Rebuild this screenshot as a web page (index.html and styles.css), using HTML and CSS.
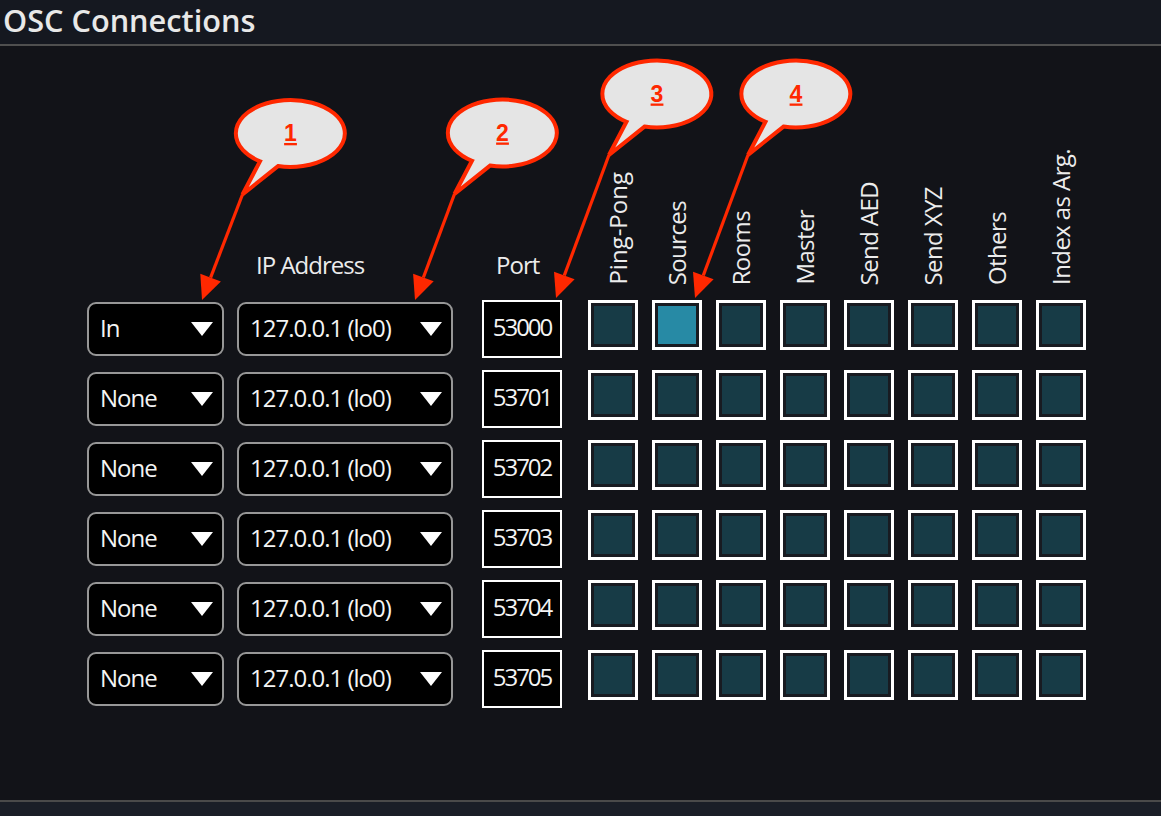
FILE: index.html
```html
<!DOCTYPE html>
<html lang="en">
<head>
<meta charset="utf-8">
<title>OSC Connections</title>
<link rel="stylesheet" href="styles.css">
</head>
<body>
<div class="app">
  <header class="titlebar"><h1 class="title">OSC Connections</h1></header>
  <main class="panel">
    <div class="table">
      <div class="row head">
        <div class="c-mode"></div>
        <div class="c-ip"><span class="hlabel ip-label">IP Address</span></div>
        <div class="c-port"><span class="hlabel port-label">Port</span></div>
        <div class="checks">
          <div class="vcell"><span class="vlabel first">Ping-Pong</span></div>
          <div class="vcell"><span class="vlabel">Sources</span></div>
          <div class="vcell"><span class="vlabel">Rooms</span></div>
          <div class="vcell"><span class="vlabel">Master</span></div>
          <div class="vcell"><span class="vlabel">Send AED</span></div>
          <div class="vcell"><span class="vlabel">Send XYZ</span></div>
          <div class="vcell"><span class="vlabel">Others</span></div>
          <div class="vcell"><span class="vlabel">Index as Arg.</span></div>
        </div>
      </div>

      <div class="row">
        <div class="select c-mode"><span class="val">In</span><i class="caret"></i></div>
        <div class="select c-ip"><span class="val">127.0.0.1 (lo0)</span><i class="caret"></i></div>
        <div class="port c-port">53000</div>
        <div class="checks">
          <div class="check"></div><div class="check on"></div><div class="check"></div><div class="check"></div>
          <div class="check"></div><div class="check"></div><div class="check"></div><div class="check"></div>
        </div>
      </div>
      <div class="row">
        <div class="select c-mode"><span class="val">None</span><i class="caret"></i></div>
        <div class="select c-ip"><span class="val">127.0.0.1 (lo0)</span><i class="caret"></i></div>
        <div class="port c-port">53701</div>
        <div class="checks">
          <div class="check"></div><div class="check"></div><div class="check"></div><div class="check"></div>
          <div class="check"></div><div class="check"></div><div class="check"></div><div class="check"></div>
        </div>
      </div>
      <div class="row">
        <div class="select c-mode"><span class="val">None</span><i class="caret"></i></div>
        <div class="select c-ip"><span class="val">127.0.0.1 (lo0)</span><i class="caret"></i></div>
        <div class="port c-port">53702</div>
        <div class="checks">
          <div class="check"></div><div class="check"></div><div class="check"></div><div class="check"></div>
          <div class="check"></div><div class="check"></div><div class="check"></div><div class="check"></div>
        </div>
      </div>
      <div class="row">
        <div class="select c-mode"><span class="val">None</span><i class="caret"></i></div>
        <div class="select c-ip"><span class="val">127.0.0.1 (lo0)</span><i class="caret"></i></div>
        <div class="port c-port">53703</div>
        <div class="checks">
          <div class="check"></div><div class="check"></div><div class="check"></div><div class="check"></div>
          <div class="check"></div><div class="check"></div><div class="check"></div><div class="check"></div>
        </div>
      </div>
      <div class="row">
        <div class="select c-mode"><span class="val">None</span><i class="caret"></i></div>
        <div class="select c-ip"><span class="val">127.0.0.1 (lo0)</span><i class="caret"></i></div>
        <div class="port c-port">53704</div>
        <div class="checks">
          <div class="check"></div><div class="check"></div><div class="check"></div><div class="check"></div>
          <div class="check"></div><div class="check"></div><div class="check"></div><div class="check"></div>
        </div>
      </div>
      <div class="row">
        <div class="select c-mode"><span class="val">None</span><i class="caret"></i></div>
        <div class="select c-ip"><span class="val">127.0.0.1 (lo0)</span><i class="caret"></i></div>
        <div class="port c-port">53705</div>
        <div class="checks">
          <div class="check"></div><div class="check"></div><div class="check"></div><div class="check"></div>
          <div class="check"></div><div class="check"></div><div class="check"></div><div class="check"></div>
        </div>
      </div>
    </div>
  </main>
  <footer class="statusbar"></footer>

  <svg class="callouts" width="1161" height="816" viewBox="0 0 1161 816" aria-hidden="true">
    <g class="arrow">
      <line x1="242.5" y1="194.5" x2="210.6" y2="277.6"/>
      <polygon points="202,300 220.9,281.5 200.3,273.7"/>
      <line x1="454.5" y1="194" x2="423.4" y2="277.5"/>
      <polygon points="415,300 433.7,281.3 413.1,273.7"/>
      <line x1="609" y1="155" x2="564.3" y2="275.5"/>
      <polygon points="556,298 574.6,279.3 554,271.7"/>
      <line x1="748" y1="155" x2="703.3" y2="275.5"/>
      <polygon points="695,298 713.6,279.3 693,271.7"/>
    </g>
    <g class="bubble" transform="translate(290.5 133.5)">
      <path d="M -12.5 32.6 A 54.5 33.5 0 1 0 -30.5 27.8 L -48 61 Z"/>
      <text x="0" y="7.5">1</text>
    </g>
    <g class="bubble" transform="translate(502.5 133)">
      <path d="M -12.5 32.6 A 54.5 33.5 0 1 0 -30.5 27.8 L -48 61 Z"/>
      <text x="0" y="7.5">2</text>
    </g>
    <g class="bubble" transform="translate(657 94)">
      <path d="M -12.5 32.6 A 54.5 33.5 0 1 0 -30.5 27.8 L -48 61 Z"/>
      <text x="0" y="7.5">3</text>
    </g>
    <g class="bubble" transform="translate(796 94)">
      <path d="M -12.5 32.6 A 54.5 33.5 0 1 0 -30.5 27.8 L -48 61 Z"/>
      <text x="0" y="7.5">4</text>
    </g>
  </svg>
</div>
</body>
</html>
```

FILE: styles.css
```css
* { box-sizing: border-box; }

html, body {
  margin: 0;
  padding: 0;
  width: 1161px;
  height: 816px;
  overflow: hidden;
  background: #121318;
}

.app {
  position: relative;
  width: 1161px;
  height: 816px;
  display: flex;
  flex-direction: column;
  font-family: "Open Sans", "Noto Sans", sans-serif;
  color: #f2f2f2;
}

.titlebar {
  height: 46px;
  flex: none;
  background: #151820;
  border-bottom: 2px solid #4f4f4f;
  padding: 3px 0 0 3px;
}

.title {
  margin: 0;
  font-weight: 600;
  font-size: 30.7px;
  line-height: 34px;
  color: #e8e8e8;
}

.panel {
  flex: 1;
  background: #121318;
  padding: 92px 0 0 87px;
}

.statusbar {
  height: 16px;
  flex: none;
  background: #1a1e27;
  border-top: 2px solid #4a4a4a;
}

.table {
  display: flex;
  flex-direction: column;
  gap: 12px;
}

.row {
  display: flex;
  align-items: flex-start;
  height: 58px;
}

.row.head {
  height: 150px;
  align-items: flex-end;
}

.c-mode { width: 137px; margin-right: 13px; flex: none; }
.c-ip   { width: 216px; margin-right: 29px; flex: none; }
.c-port { width: 80px;  margin-right: 26px; flex: none; }

.checks {
  display: flex;
  gap: 14px;
}

/* header labels */
.hlabel {
  display: block;
  font-size: 24px;
  line-height: 26px;
  letter-spacing: -1px;
  margin-bottom: 10px;
  color: #ececec;
  white-space: nowrap;
}
.ip-label { padding-left: 19px; }
.port-label { padding-left: 14px; }

.vcell {
  width: 50px;
  display: flex;
  justify-content: center;
  align-items: flex-end;
  padding-bottom: 3px;
}

.vlabel {
  writing-mode: vertical-rl;
  transform: rotate(180deg);
  font-size: 24px;
  line-height: 26px;
  letter-spacing: -0.6px;
  color: #ececec;
  white-space: nowrap;
}
.vlabel.first { margin-left: 10px; letter-spacing: 0; }

/* dropdowns */
.select {
  height: 54px;
  margin-top: 2px;
  background: #000;
  border: 2px solid #979797;
  border-radius: 9px;
  display: flex;
  align-items: center;
  justify-content: space-between;
  padding: 0 9px 3px 11px;
}

.val {
  font-size: 24px;
  line-height: 26px;
  letter-spacing: -1px;
  white-space: nowrap;
  color: #f4f4f4;
}

.caret {
  flex: none;
  width: 0;
  height: 0;
  border-left: 11px solid transparent;
  border-right: 11px solid transparent;
  border-top: 14px solid #ffffff;
  margin-top: 3px;
}

/* port */
.port {
  height: 58px;
  background: #000;
  border: 2px solid #ffffff;
  display: flex;
  align-items: center;
  justify-content: center;
  padding-bottom: 4px;
  font-size: 24px;
  line-height: 26px;
  color: #f4f4f4;
  letter-spacing: -2px;
}

/* toggle squares */
.check {
  width: 50px;
  height: 50px;
  border: 3px solid #ffffff;
  background: #173b46;
  box-shadow: inset 0 0 0 3px #181b21;
}
.check.on {
  background: #278aa5;
}

/* annotation overlay */
.callouts {
  position: absolute;
  left: 0;
  top: 0;
  pointer-events: none;
}

.arrow line {
  stroke: #ff2800;
  stroke-width: 3.2;
}
.arrow polygon {
  fill: #ff2800;
}

.bubble path {
  fill: #e5e5e5;
  stroke: #ff2800;
  stroke-width: 4;
  stroke-linejoin: miter;
}

.bubble text {
  font-family: "Liberation Sans", Arial, sans-serif;
  font-weight: 700;
  font-size: 23px;
  fill: #ff2800;
  text-anchor: middle;
  text-decoration: underline;
}
```
